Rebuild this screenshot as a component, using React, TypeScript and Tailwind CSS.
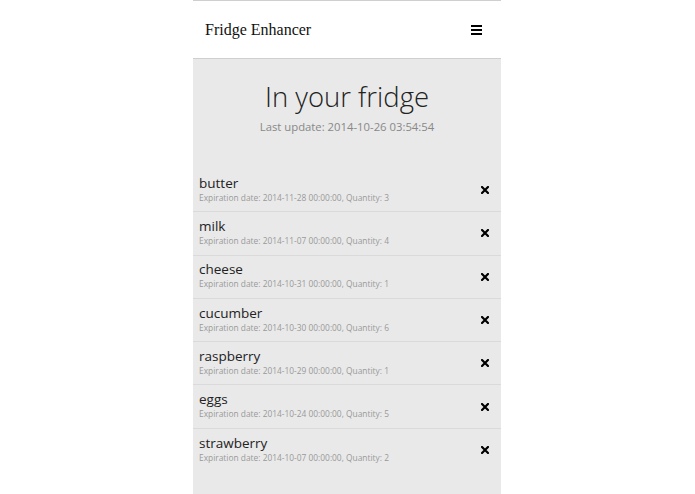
import React from "react";

const items = [
  { name: "butter", date: "2014-11-28 00:00:00", qty: 3 },
  { name: "milk", date: "2014-11-07 00:00:00", qty: 4 },
  { name: "cheese", date: "2014-10-31 00:00:00", qty: 1 },
  { name: "cucumber", date: "2014-10-30 00:00:00", qty: 6 },
  { name: "raspberry", date: "2014-10-29 00:00:00", qty: 1 },
  { name: "eggs", date: "2014-10-24 00:00:00", qty: 5 },
  { name: "strawberry", date: "2014-10-07 00:00:00", qty: 2 },
];

function XIcon() {
  return (
    <svg width="8" height="8" viewBox="0 0 8 8">
      <path d="M1 1 L7 7 M7 1 L1 7" stroke="#000" strokeWidth="2.2" strokeLinecap="square" />
    </svg>
  );
}

export default function App() {
  return (
    <div className="w-[695px] h-[494px] bg-white overflow-hidden" style={{ fontFamily: '"Open Sans", sans-serif' }}>
      <div className="ml-[193px] w-[308px] h-[494px] flex flex-col bg-[#e9e9e9]">
        <header className="h-[59px] bg-white border-t border-b border-[#cfcfcf] flex items-center justify-between pl-[12px] pr-[19px]">
          <span className="text-[16px] text-[#111]" style={{ fontFamily: '"Liberation Serif", serif' }}>
            Fridge Enhancer
          </span>
          <div className="flex flex-col gap-[2px] w-[11px]">
            <div className="h-[2px] bg-black" />
            <div className="h-[2px] bg-black" />
            <div className="h-[2px] bg-black" />
          </div>
        </header>
        <div className="flex flex-col items-center pt-[18px]">
          <h1 className="text-[27.5px] font-light text-[#222] leading-[40px]">In your fridge</h1>
          <p className="text-[11.3px] text-[#888] leading-[18px] mt-[1px]">Last update: 2014-10-26 03:54:54</p>
        </div>
        <ul className="mt-[33px]">
          {items.map((it, i) => (
            <li
              key={it.name}
              className={`h-[43.3px] flex items-center justify-between pl-[6px] pr-[12px] ${i < items.length - 1 ? "border-b border-[#dadada]" : ""}`}
            >
              <div className="flex flex-col -mt-[2px]">
                <span className="text-[13.5px] text-[#222] leading-[17px]">{it.name}</span>
                <span className="text-[8.4px] text-[#999] leading-[12px]">
                  Expiration date: {it.date}, Quantity: {it.qty}
                </span>
              </div>
              <XIcon />
            </li>
          ))}
        </ul>
      </div>
    </div>
  );
}
